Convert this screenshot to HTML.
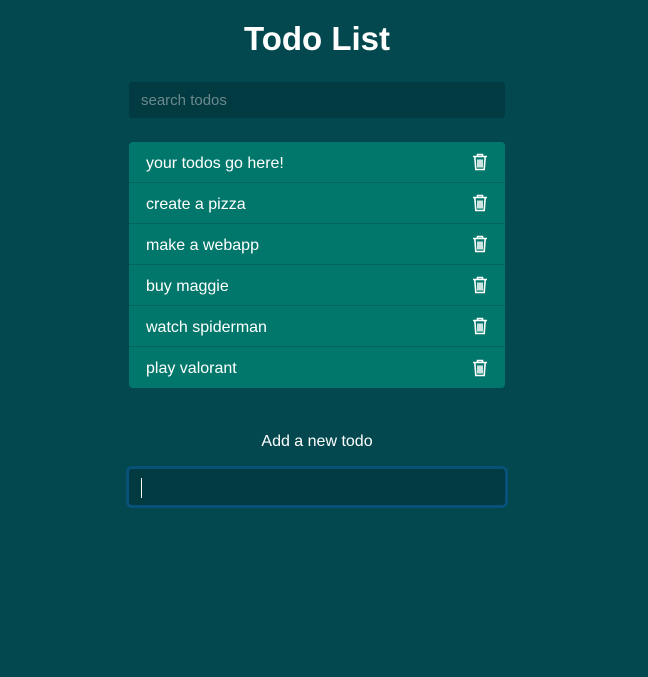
<!DOCTYPE html>
<html><head><style>
*{box-sizing:border-box;margin:0;padding:0}
body{width:648px;height:677px;background:#03484f;font-family:"Liberation Sans",sans-serif;color:#fff;position:relative;overflow:hidden}
h1{position:absolute;top:20px;left:0;width:634px;text-align:center;font-size:33px;font-weight:bold}
.search{position:absolute;left:129px;top:82px;width:376px;height:36px;background:#013a41;border-radius:3px;color:#6b8a8e;font-size:15px;padding:10px 12px}
.list{position:absolute;left:129px;top:142px;width:376px;background:#01776b;border-radius:4px;overflow:hidden}
.item{height:41px;border-bottom:1px solid #03645a;padding:3px 17px 0;display:flex;align-items:center;justify-content:space-between;font-size:16px}
.item svg{margin-top:-3px}
.item:last-child{border-bottom:none}
.add{position:absolute;top:433px;left:0;width:634px;text-align:center;font-size:16px}
.inp{position:absolute;left:126px;top:466px;width:382px;height:42px;background:#013a41;border:3px solid #08527a;border-radius:6px}
.caret{position:absolute;left:12px;top:9px;width:1px;height:20px;background:#fff}
</style></head><body>
<h1>Todo List</h1>
<div class="search">search todos</div>
<div class="list">
<div class="item"><span>your todos go here!</span><svg width="16" height="18" viewBox="0 0 16 18" fill="none" stroke="#fff" stroke-width="1.6"><path d="M1 3.5h14M5.5 3.5V1.5h5v2M2.8 3.5l1 13h8.4l1-13M6 6.5v8M8 6.5v8M10 6.5v8"/></svg></div>
<div class="item"><span>create a pizza</span><svg width="16" height="18" viewBox="0 0 16 18" fill="none" stroke="#fff" stroke-width="1.6"><path d="M1 3.5h14M5.5 3.5V1.5h5v2M2.8 3.5l1 13h8.4l1-13M6 6.5v8M8 6.5v8M10 6.5v8"/></svg></div>
<div class="item"><span>make a webapp</span><svg width="16" height="18" viewBox="0 0 16 18" fill="none" stroke="#fff" stroke-width="1.6"><path d="M1 3.5h14M5.5 3.5V1.5h5v2M2.8 3.5l1 13h8.4l1-13M6 6.5v8M8 6.5v8M10 6.5v8"/></svg></div>
<div class="item"><span>buy maggie</span><svg width="16" height="18" viewBox="0 0 16 18" fill="none" stroke="#fff" stroke-width="1.6"><path d="M1 3.5h14M5.5 3.5V1.5h5v2M2.8 3.5l1 13h8.4l1-13M6 6.5v8M8 6.5v8M10 6.5v8"/></svg></div>
<div class="item"><span>watch spiderman</span><svg width="16" height="18" viewBox="0 0 16 18" fill="none" stroke="#fff" stroke-width="1.6"><path d="M1 3.5h14M5.5 3.5V1.5h5v2M2.8 3.5l1 13h8.4l1-13M6 6.5v8M8 6.5v8M10 6.5v8"/></svg></div>
<div class="item"><span>play valorant</span><svg width="16" height="18" viewBox="0 0 16 18" fill="none" stroke="#fff" stroke-width="1.6"><path d="M1 3.5h14M5.5 3.5V1.5h5v2M2.8 3.5l1 13h8.4l1-13M6 6.5v8M8 6.5v8M10 6.5v8"/></svg></div>
</div>
<div class="add">Add a new todo</div>
<div class="inp"><div class="caret"></div></div>
</body></html>
